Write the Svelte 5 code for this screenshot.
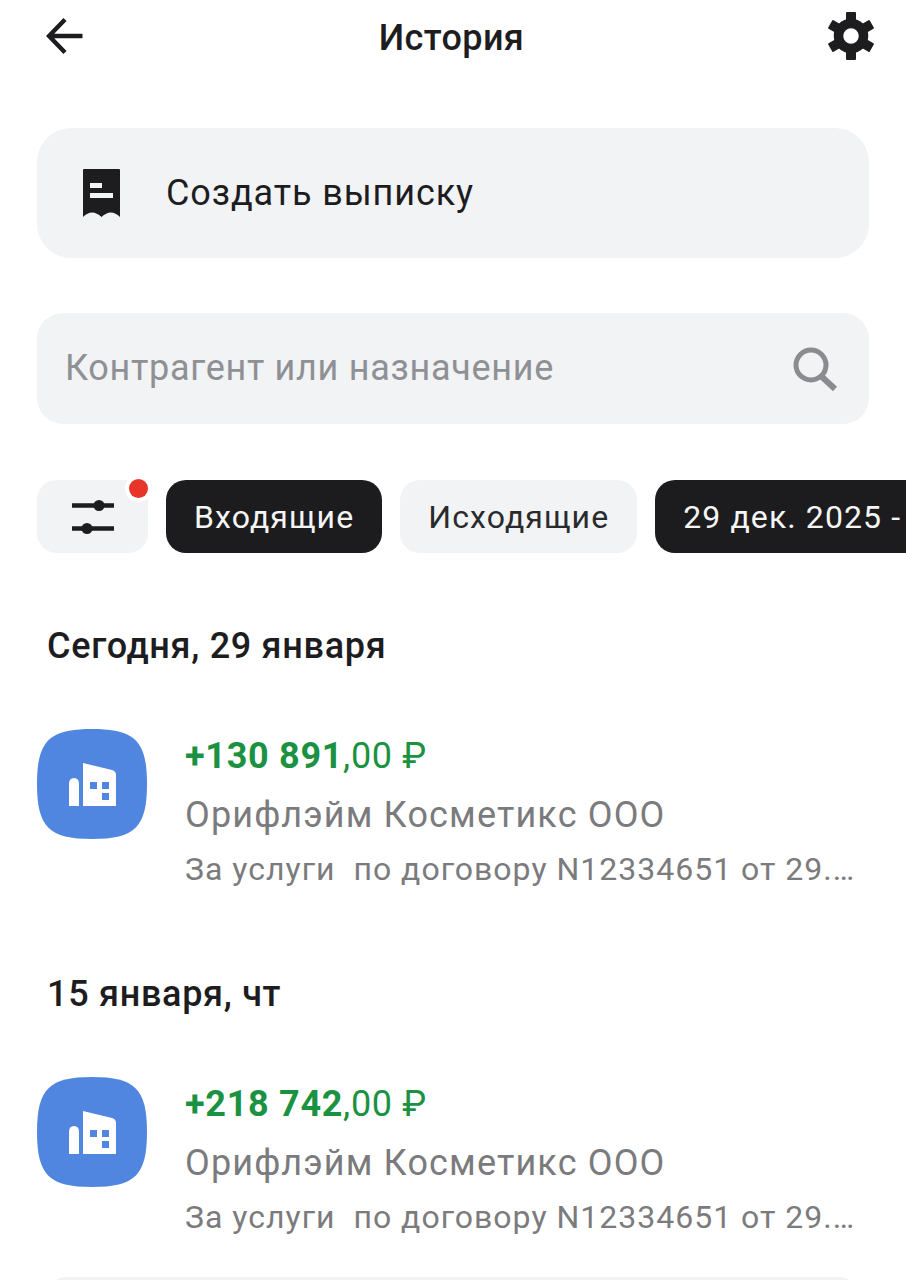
<script>
  const chips = [
    { label: 'Входящие', dark: true },
    { label: 'Исходящие', dark: false },
    { label: '29 дек. 2025 - 29 янв. 2026', dark: true }
  ];

  const groups = [
    { title: 'Сегодня, 29 января', bold: true, whole: '+130 891' },
    { title: '15 января, чт', bold: false, whole: '+218 742' }
  ];

  const teeth = [0, 60, 120, 180, 240, 300];
</script>

<div class="page">
  <header class="topbar">
    <svg class="back" width="40" height="40" viewBox="0 0 40 40" aria-hidden="true">
      <path d="M19 2.5 L3 19 L19 35.5 M3 19 H36.5" fill="none" stroke="#1d1d1f" stroke-width="4.4" />
    </svg>
    <h1>История</h1>
    <svg class="gear" width="48" height="48" viewBox="-24 -24 48 48" aria-hidden="true">
      <circle r="12.5" fill="none" stroke="#1d1d1f" stroke-width="9.5" />
      {#each teeth as angle}
        <rect x="-5" y="-24" width="10" height="9" rx="1" fill="#1d1d1f" transform="rotate({angle})" />
      {/each}
    </svg>
  </header>

  <button class="statement">
    <svg width="37" height="49" viewBox="0 0 37 49" aria-hidden="true">
      <path
        fill="#1d1d1f"
        fill-rule="evenodd"
        d="M1 0H36a1 1 0 0 1 1 1V48Q28 39 18.5 48Q9 39 0 48V1a1 1 0 0 1 1-1z M7 14v5h12v-5z M7 24v5h23v-5z"
      />
    </svg>
    <span>Создать выписку</span>
  </button>

  <div class="search">
    <span>Контрагент или назначение</span>
    <svg width="46" height="46" viewBox="0 0 46 46" aria-hidden="true">
      <circle cx="19" cy="19" r="15" fill="none" stroke="#8a8c90" stroke-width="5" />
      <path d="M29 30 L43 43" stroke="#8a8c90" stroke-width="6" />
    </svg>
  </div>

  <div class="chips">
    <div class="filter">
      <svg width="44" height="36" viewBox="0 0 44 36" aria-hidden="true">
        <path d="M1 6.5H43M1 29.5H43" stroke="#1d1d1f" stroke-width="4.5" />
        <circle cx="28" cy="6.5" r="5.5" fill="#1d1d1f" />
        <circle cx="16" cy="29.5" r="5.5" fill="#1d1d1f" />
      </svg>
      <i class="dot"></i>
    </div>
    {#each chips as chip}
      <div class="chip" class:dark={chip.dark}>{chip.label}</div>
    {/each}
  </div>

  {#each groups as group}
    <section class="group">
      <h2 class:bold={group.bold}>{group.title}</h2>
      <div class="row">
        <svg class="avatar" viewBox="0 0 110 110" width="110" height="110" aria-hidden="true">
          <path fill="#5186e0" d="M55 0C98 0 110 12 110 55S98 110 55 110S0 98 0 55S12 0 55 0z" />
          <path
            fill="#fff"
            fill-rule="evenodd"
            d="M46 34L75 41Q79 42 79 46V77H46z M32 77V55Q32 49 37 49Q42 49 42 55V77z M53 53v7h7v-7z M65 53v7h7v-7z M65 64v7h7v-7z"
          />
        </svg>
        <div class="info">
          <div class="amount"><b>{group.whole}</b>,00 ₽</div>
          <div class="name">Орифлэйм Косметикс ООО</div>
          <div class="purpose">За услуги&nbsp; по договору N12334651 от 29.…</div>
        </div>
      </div>
    </section>
  {/each}

  <div class="next"></div>
</div>

<style>
  :global(body) {
    background: #fff;
  }

  .page {
    width: 906px;
    height: 1280px;
    overflow: hidden;
    box-sizing: border-box;
    padding: 0 37px;
    font-family: Roboto, "Noto Sans", sans-serif;
    color: #1d1d1f;
  }

  .topbar {
    height: 74px;
    display: flex;
    align-items: center;
    justify-content: space-between;
    margin-bottom: 54px;
  }

  .back {
    margin-left: 9px;
    margin-top: -1px;
  }

  .gear {
    margin-right: -6px;
    margin-top: -2px;
  }

  h1 {
    margin: 2px 0 0;
    font-size: 36px;
    font-weight: 500;
    line-height: 1;
    letter-spacing: 0.4px;
    transform: translateX(-5px);
  }

  .statement {
    width: 832px;
    height: 130px;
    border: none;
    border-radius: 34px;
    background: #f1f3f5;
    display: flex;
    align-items: center;
    gap: 46px;
    padding: 0 0 0 46px;
    font: inherit;
    font-size: 36px;
    color: #1d1d1f;
    letter-spacing: 0.9px;
  }

  .search {
    width: 832px;
    height: 111px;
    margin-top: 55px;
    border-radius: 26px;
    background: #f1f3f5;
    display: flex;
    align-items: center;
    justify-content: space-between;
    box-sizing: border-box;
    padding: 0 31px 0 28px;
    font-size: 36px;
    letter-spacing: 0.7px;
    color: #8e9094;
  }

  .search span {
    margin-top: -2px;
  }

  .chips {
    display: flex;
    gap: 18px;
    margin-top: 56px;
    width: 1200px;
  }

  .filter {
    position: relative;
    width: 111px;
    height: 73px;
    border-radius: 20px;
    background: #f1f3f5;
    display: flex;
    align-items: center;
    justify-content: center;
  }

  .dot {
    position: absolute;
    top: -1px;
    right: 0;
    width: 19px;
    height: 19px;
    border-radius: 50%;
    background: #e8352a;
    box-shadow: 0 0 0 4px #fff;
  }

  .chip {
    height: 73px;
    display: flex;
    align-items: center;
    padding: 0 28px;
    box-sizing: border-box;
    border-radius: 20px;
    background: #f1f3f5;
    font-size: 32px;
    letter-spacing: 1.1px;
    white-space: nowrap;
    color: #2a2a2c;
  }

  .chip.dark {
    background: #1c1c1e;
    color: #f5f5f5;
  }

  .group {
    margin-top: 70px;
  }

  .group + .group {
    margin-top: 79px;
  }

  h2 {
    margin: 0 0 0 10px;
    font-size: 36px;
    font-weight: 500;
    line-height: 46px;
    letter-spacing: 0.7px;
  }

  .row {
    display: flex;
    gap: 38px;
    margin-top: 60px;
  }

  .avatar {
    flex: none;
    display: block;
  }

  .info {
    margin-top: 3px;
    white-space: nowrap;
  }

  .amount {
    font-size: 36px;
    line-height: 48px;
    color: #1b9142;
    letter-spacing: 0.7px;
  }

  .amount b {
    font-weight: 700;
  }

  .name {
    margin-top: 12px;
    font-size: 36px;
    line-height: 46px;
    letter-spacing: 1.15px;
    color: #7b7b7d;
  }

  .purpose {
    margin-top: 8px;
    font-size: 32px;
    line-height: 46px;
    letter-spacing: 1px;
    color: #7b7b7d;
  }

  .next {
    width: 805px;
    height: 30px;
    margin: 37px 0 0 13px;
    border-radius: 20px;
    background: #f1f3f5;
  }
</style>
